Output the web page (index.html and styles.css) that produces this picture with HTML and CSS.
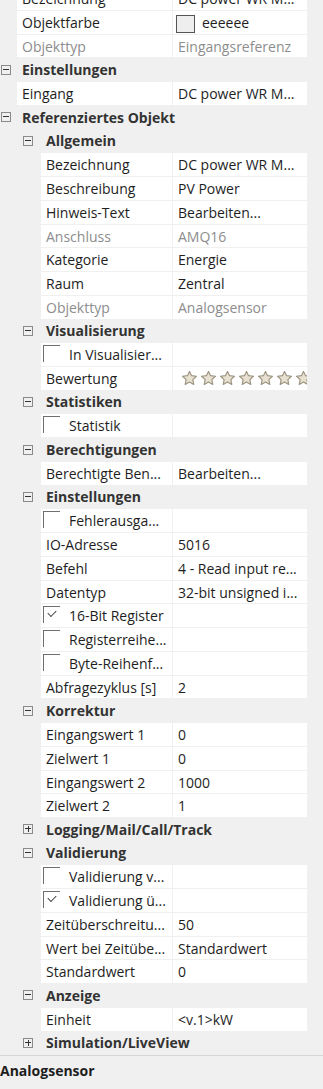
FILE: index.html
```html
<!DOCTYPE html>
<html lang="de">
<head>
    <meta charset="UTF-8">
    <meta name="viewport" content="width=device-width, initial-scale=1.0">
    <title>Eigenschaften</title>
    <link rel="stylesheet" href="styles.css">
</head>
<body>

    <svg class="defs" width="0" height="0">
        <symbol id="star" viewBox="0 0 14 14">
            <path d="M7 0.4 L8.94 4.33 L13.47 4.9 L10.14 8.02 L11 12.6 L7 10.3 L3 12.6 L3.86 8.02 L0.53 4.9 L5.06 4.33 Z" fill="#e8e1d1" stroke="#9c9380" stroke-width="1.1" stroke-linejoin="round"/>
        </symbol>
    </svg>

    <!-- Property grid -->
    <div class="grid">
        <div class="prop l0"><div class="name">Bezeichnung</div><div class="value">DC power WR M...</div></div>
        <div class="prop l0"><div class="name">Objektfarbe</div><div class="value"><span class="swatch"></span>eeeeee</div></div>
        <div class="prop l0 ro"><div class="name">Objekttyp</div><div class="value">Eingangsreferenz</div></div>

        <div class="cat l0"><span class="toggle"></span>Einstellungen</div>
        <div class="prop l0"><div class="name">Eingang</div><div class="value">DC power WR M...</div></div>

        <div class="cat l0"><span class="toggle"></span>Referenziertes Objekt</div>

        <div class="cat l1"><span class="toggle"></span>Allgemein</div>
        <div class="prop l1"><div class="name">Bezeichnung</div><div class="value">DC power WR M...</div></div>
        <div class="prop l1"><div class="name">Beschreibung</div><div class="value">PV Power</div></div>
        <div class="prop l1"><div class="name">Hinweis-Text</div><div class="value">Bearbeiten...</div></div>
        <div class="prop l1 ro"><div class="name">Anschluss</div><div class="value">AMQ16</div></div>
        <div class="prop l1"><div class="name">Kategorie</div><div class="value">Energie</div></div>
        <div class="prop l1"><div class="name">Raum</div><div class="value">Zentral</div></div>
        <div class="prop l1 ro"><div class="name">Objekttyp</div><div class="value">Analogsensor</div></div>

        <div class="cat l1"><span class="toggle"></span>Visualisierung</div>
        <div class="prop l1 check"><div class="name"><span class="box"></span>In Visualisier...</div><div class="value"></div></div>
        <div class="prop l1"><div class="name">Bewertung</div>
            <div class="value stars">
                <svg><use href="#star"/></svg><svg><use href="#star"/></svg><svg><use href="#star"/></svg><svg><use href="#star"/></svg><svg><use href="#star"/></svg><svg><use href="#star"/></svg><svg><use href="#star"/></svg>
            </div>
        </div>

        <div class="cat l1"><span class="toggle"></span>Statistiken</div>
        <div class="prop l1 check"><div class="name"><span class="box"></span>Statistik</div><div class="value"></div></div>

        <div class="cat l1"><span class="toggle"></span>Berechtigungen</div>
        <div class="prop l1"><div class="name">Berechtigte Ben...</div><div class="value">Bearbeiten...</div></div>

        <div class="cat l1"><span class="toggle"></span>Einstellungen</div>
        <div class="prop l1 check"><div class="name"><span class="box"></span>Fehlerausga...</div><div class="value"></div></div>
        <div class="prop l1"><div class="name">IO-Adresse</div><div class="value">5016</div></div>
        <div class="prop l1"><div class="name">Befehl</div><div class="value">4 - Read input re...</div></div>
        <div class="prop l1"><div class="name">Datentyp</div><div class="value">32-bit unsigned i...</div></div>
        <div class="prop l1 check"><div class="name"><span class="box checked"></span>16-Bit Register</div><div class="value"></div></div>
        <div class="prop l1 check"><div class="name"><span class="box"></span>Registerreihe...</div><div class="value"></div></div>
        <div class="prop l1 check"><div class="name"><span class="box"></span>Byte-Reihenf...</div><div class="value"></div></div>
        <div class="prop l1"><div class="name">Abfragezyklus [s]</div><div class="value">2</div></div>

        <div class="cat l1"><span class="toggle"></span>Korrektur</div>
        <div class="prop l1"><div class="name">Eingangswert 1</div><div class="value">0</div></div>
        <div class="prop l1"><div class="name">Zielwert 1</div><div class="value">0</div></div>
        <div class="prop l1"><div class="name">Eingangswert 2</div><div class="value">1000</div></div>
        <div class="prop l1"><div class="name">Zielwert 2</div><div class="value">1</div></div>

        <div class="cat l1"><span class="toggle plus"></span>Logging/Mail/Call/Track</div>

        <div class="cat l1"><span class="toggle"></span>Validierung</div>
        <div class="prop l1 check"><div class="name"><span class="box"></span>Validierung v...</div><div class="value"></div></div>
        <div class="prop l1 check"><div class="name"><span class="box checked"></span>Validierung ü...</div><div class="value"></div></div>
        <div class="prop l1"><div class="name">Zeitüberschreitu...</div><div class="value">50</div></div>
        <div class="prop l1"><div class="name">Wert bei Zeitübe...</div><div class="value">Standardwert</div></div>
        <div class="prop l1"><div class="name">Standardwert</div><div class="value">0</div></div>

        <div class="cat l1"><span class="toggle"></span>Anzeige</div>
        <div class="prop l1"><div class="name">Einheit</div><div class="value">&lt;v.1&gt;kW</div></div>

        <div class="cat l1"><span class="toggle plus"></span>Simulation/LiveView</div>
    </div>

    <!-- Description panel -->
    <div class="description">
        <h4>Analogsensor</h4>
    </div>

</body>
</html>
```
FILE: styles.css
```css
* {
    margin: 0;
    padding: 0;
    box-sizing: border-box;
}

body {
    font-family: "Open Sans", "Noto Sans", sans-serif;
    font-size: 14px;
    background-color: #f0f0f0;
    color: #1e1e1e;
    height: 1089px;
    overflow: hidden;
}

.defs {
    position: absolute;
}

/* Property grid */
.grid {
    width: 307px;
    margin-top: -12.74px;
}

.prop, .cat {
    height: 22.74px;
    line-height: 23.5px;
    margin-bottom: 1px;
}

.prop {
    display: grid;
    grid-template-columns: 1fr 134px;
    column-gap: 1px;
}

.prop.l0 {
    margin-left: 17px;
}

.prop.l1 {
    margin-left: 41px;
}

.name, .value {
    background-color: #fff;
    white-space: nowrap;
    overflow: hidden;
    padding-left: 5px;
}

.ro .name, .ro .value {
    color: #8d8d8d;
}

/* Category rows */
.cat {
    display: flex;
    align-items: center;
    font-weight: 700;
    color: #333;
}

.cat.l0 {
    padding-left: 1px;
}

.cat.l1 {
    padding-left: 23px;
}

.toggle {
    position: relative;
    width: 10px;
    height: 10px;
    border: 1px solid #8a8a8a;
    margin-right: 11px;
}

.cat.l1 .toggle {
    margin-right: 13px;
}

.toggle::before {
    content: "";
    position: absolute;
    left: 1px;
    top: 3px;
    width: 6px;
    height: 1px;
    background-color: #333;
}

.toggle.plus::after {
    content: "";
    position: absolute;
    left: 3.5px;
    top: 1px;
    width: 1px;
    height: 6px;
    background-color: #333;
}

/* Check box rows */
.check .name {
    display: flex;
    align-items: flex-start;
    padding-left: 2px;
}

.box {
    position: relative;
    flex: none;
    width: 17px;
    height: 17px;
    margin: 2px 9px 0 0;
    border-top: 1px solid #6e6e6e;
    border-left: 1px solid #6e6e6e;
}

.box.checked::after {
    content: "";
    position: absolute;
    left: 4px;
    top: 3px;
    width: 7px;
    height: 4px;
    border-left: 1px solid #444;
    border-bottom: 1px solid #444;
    transform: rotate(-45deg);
}

/* Colour swatch */
.swatch {
    display: inline-block;
    width: 19px;
    height: 18px;
    margin: 0 7px 0 -2px;
    vertical-align: middle;
    background-color: #eeeeee;
    border: 1px solid #555;
}

/* Rating stars */
.stars {
    display: flex;
    align-items: center;
    gap: 4px;
    padding-left: 9px;
}

.stars svg {
    flex: none;
    width: 15px;
    height: 15px;
}

/* Description panel */
.description {
    border-top: 1px solid #d6d6d6;
    padding-top: 5px;
}

.description h4 {
    font-size: 14px;
    line-height: 20px;
    font-weight: 700;
    color: #1e1e1e;
}
```
